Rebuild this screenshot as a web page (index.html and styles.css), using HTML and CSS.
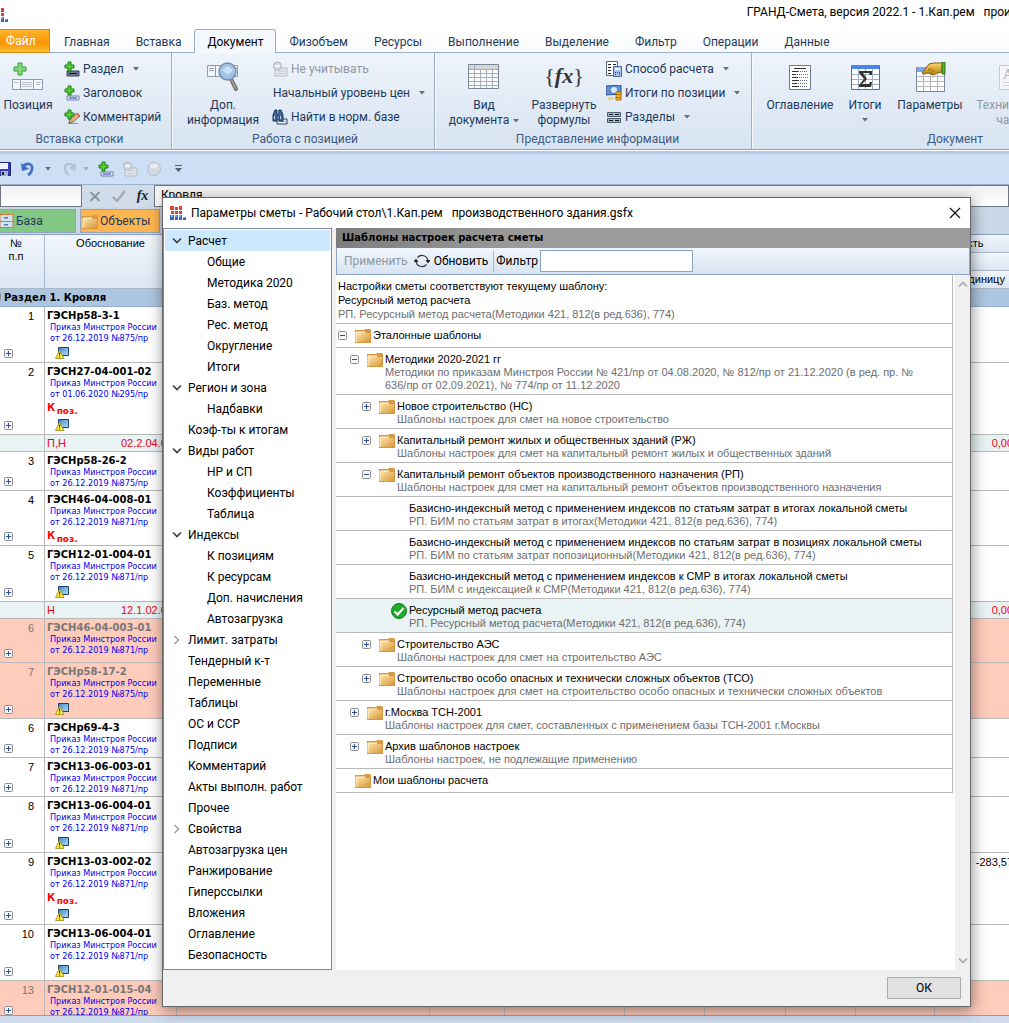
FILE: index.html
```html
<!DOCTYPE html>
<html lang="ru">
<head>
<meta charset="utf-8">
<title>ГРАНД-Смета</title>
<link rel="stylesheet" href="styles.css">
</head>
<body>
<svg class="sprite" aria-hidden="true">
  <defs>
    <linearGradient id="gFolder" x1="0" y1="0" x2="1" y2="1"><stop offset="0" stop-color="#fde9ac"/><stop offset="1" stop-color="#d9963a"/></linearGradient>
    <linearGradient id="gBlue" x1="0" y1="0" x2="1" y2="1"><stop offset="0" stop-color="#3f86c4"/><stop offset="1" stop-color="#b5e0fa"/></linearGradient>
    <linearGradient id="gHand" x1="0" y1="0" x2="0" y2="1"><stop offset="0" stop-color="#fbd768"/><stop offset="1" stop-color="#b07a10"/></linearGradient>
    <symbol id="logo" viewBox="0 0 16 14">
      <path d="M0 0h4v4H0zM5 1h3v3H5zM9 0h3v4H9zM1 5h3v3H1zM5 5h3v3H5zM9 5h3v3H9z" fill="#d6453a"/>
      <path d="M0 9h4v5H0zM5 9h3v5H5zM9 9h3v5H9zM13 11h3v3h-3z" fill="#3566b0"/>
      <path d="M1 9h2v2H1zM5 9h2v2H5zM9 9h2v2H9zM13 11h2v1h-2z" fill="#7fb0ea"/>
    </symbol>
    <symbol id="folder" viewBox="0 0 16 15">
      <path d="M8 3l2-2h5l1 1v3H8z" fill="#d99a45"/>
      <path d="M0 2h10v2h6v11H0z" fill="#d8973f"/>
      <path d="M1 4h9l1 1h4v9H1z" fill="url(#gFolder)"/>
      <path d="M1 14V4h9" fill="none" stroke="#fff6d8"/>
    </symbol>
    <symbol id="plus" viewBox="0 0 9 9">
      <rect x=".5" y=".5" width="8" height="8" rx="1" fill="#f6f6f6" stroke="#8f8f8f"/>
      <path d="M2 4.500h5M4.500 2v5" stroke="#2e4f9e"/>
    </symbol>
    <symbol id="minus" viewBox="0 0 9 9">
      <rect x=".5" y=".5" width="8" height="8" rx="1" fill="#f6f6f6" stroke="#8f8f8f"/>
      <path d="M2 4.500h5" stroke="#2e4f9e"/>
    </symbol>
    <symbol id="caret" viewBox="0 0 6 4"><path d="M0 0h6L3 3.500z" fill="#666c78"/></symbol>
    <symbol id="down" viewBox="0 0 10 8"><path d="M1 1.500l4 4 4-4" fill="none" stroke="#404040" stroke-width="1.700"/></symbol>
    <symbol id="right" viewBox="0 0 8 10"><path d="M1.500 1l4 4-4 4" fill="none" stroke="#a6a6a6" stroke-width="1.700"/></symbol>
    <symbol id="addrow" viewBox="0 0 16 16">
      <path d="M3 11h12v4H3z" fill="#e8edf5" stroke="#6a7f9d"/><path d="M5 13h8" stroke="#1b35c9"/>
      <path d="M4 1h3v3h3v3H7v3H4V7H1V4h3z" fill="#4fd22c" stroke="#1f7d16"/>
    </symbol>
    <symbol id="addsec" viewBox="0 0 16 16">
      <path d="M3 10h12v5H3z" fill="#6c7a8c" stroke="#3a4656"/><path d="M5 12.500h8" stroke="#10151c"/>
      <path d="M4 1h3v3h3v3H7v3H4V7H1V4h3z" fill="#4fd22c" stroke="#1f7d16"/>
    </symbol>
    <symbol id="addnote" viewBox="0 0 16 16">
      <path d="M4 14.500h10" stroke="#8a94a8"/><path d="M5 14l1-4 7-6 3 3-7 6z" fill="#e3b27c" stroke="#6b4a3a" stroke-width=".8"/>
      <path d="M12 5l1.500-1.500L16 6l-1.300 1.500z" fill="#d9746c"/>
      <path d="M4 1h3v3h3v3H7v3H4V7H1V4h3z" fill="#4fd22c" stroke="#1f7d16"/>
    </symbol>
    <symbol id="skip" viewBox="0 0 16 16">
      <path d="M3 7h12v8H3z" fill="#e3e7ee" stroke="#b4bac6"/><path d="M5 10h8M5 12.500h8" stroke="#c3c8d2"/>
      <circle cx="5.500" cy="5" r="4" fill="#d5d9e0" stroke="#b0b6c2"/><path d="M3 5h5" stroke="#fff" stroke-width="1.500"/>
    </symbol>
    <symbol id="warn" viewBox="0 0 14 12">
      <path d="M3.500.5h10v8h-10z" fill="url(#gBlue)" stroke="#1d3f63"/>
      <path d="M4.500 3L9 11.500H.5z" fill="#ffe93a" stroke="#9a8a1c" stroke-width=".8"/><path d="M4.600 5.500v3M4.600 9.500v1" stroke="#222"/>
    </symbol>
  </defs>
</svg>

<header class="titlebar">
  <svg class="app-logo"><use href="#logo"/></svg>
  <h1 class="app-title">ГРАНД-Смета, версия 2022.1 - 1.Кап.рем&nbsp;&nbsp; производственного здания.gsfx</h1>
</header>

<nav class="tabs">
  <button class="tab tab-file">Файл</button>
  <button class="tab">Главная</button>
  <button class="tab">Вставка</button>
  <button class="tab tab-active">Документ</button>
  <button class="tab">Физобъем</button>
  <button class="tab">Ресурсы</button>
  <button class="tab">Выполнение</button>
  <button class="tab">Выделение</button>
  <button class="tab">Фильтр</button>
  <button class="tab">Операции</button>
  <button class="tab">Данные</button>
</nav>

<section class="ribbon">
  <div class="group group-insert">
    <div class="group-body">
      <button class="big w56">
        <svg class="ico32" viewBox="0 0 32 32"><path d="M6 1h4v4h4v4h-4v4H6V9H2V5h4z" fill="#7fdc74" stroke="#3f9a44"/><path d="M.5 17.500h30v10H.5z" fill="#f3f6fa" stroke="#8d9bb0"/><path d="M8.500 18v9M21.500 18v9" stroke="#8d9bb0"/><path d="M2 20.500h5M10 20.500h10M10 22.500h10M10 24.500h10M24 20.500h5M24 22.500h4" stroke="#b9c0cb"/></svg>
        <span>Позиция</span>
      </button>
      <div class="stack stack-insert">
        <button class="small"><svg class="ico16"><use href="#addsec"/></svg>Раздел<svg class="caret"><use href="#caret"/></svg></button>
        <button class="small"><svg class="ico16"><use href="#addrow"/></svg>Заголовок</button>
        <button class="small"><svg class="ico16"><use href="#addnote"/></svg>Комментарий</button>
      </div>
    </div>
    <div class="group-label">Вставка строки</div>
  </div>
  <div class="group group-position">
    <div class="group-body">
      <button class="big w94">
        <svg class="ico32" viewBox="0 0 32 32"><path d="M.5 3.500h30v11H.5z" fill="#f3f6fa" stroke="#8d9bb0"/><path d="M8.500 4v10" stroke="#8d9bb0"/><path d="M2 6.500h5M2 8.500h5M26 6.500h4" stroke="#9aa6b8"/><path d="M24 17l5 10" stroke="#77736f" stroke-width="4" stroke-linecap="round"/><path d="M24 17l5 10" stroke="#bdbab6" stroke-width="1"/><circle cx="20.500" cy="9.500" r="8.500" fill="#9fc4ea" stroke="#7d8da3" stroke-width="1.500"/><path d="M15 8l6-4 5 4-5 5z" fill="#cbe2f8"/></svg>
        <span>Доп.<br>информация</span>
      </button>
      <div class="stack">
        <button class="small" disabled><svg class="ico16"><use href="#skip"/></svg>Не учитывать</button>
        <button class="small no-icon">Начальный уровень цен<svg class="caret"><use href="#caret"/></svg></button>
        <button class="small"><svg class="ico16" viewBox="0 0 16 16"><path d="M5 10h10v5H5z" fill="#eef2f8" stroke="#2e405c"/><path d="M6 12.500h8" stroke="#93a3bb"/><path d="M1 12V6l2-5h2v4h2V1h2l2 5v6H7V7H5v5z" fill="#41689c" stroke="#1c365e"/><path d="M2.500 7v3M8.500 7v3" stroke="#b9d2ef"/></svg>Найти в норм. базе</button>
      </div>
    </div>
    <div class="group-label">Работа с позицией</div>
  </div>
  <div class="group group-view">
    <div class="group-body">
      <button class="big w80">
        <svg class="ico32" viewBox="0 0 32 32"><path d="M.5 2.500h30v24H.5z" fill="#fff" stroke="#77879a"/><path d="M1 3h29v4H1z" fill="#d7d8d6"/><path d="M1 7.500h29M1 11.500h29M1 15.500h29M1 19.500h29M1 23.500h29M6.500 3v23M12.500 7v19M18.500 7v19M24.500 7v19" stroke="#a3adbd"/></svg>
        <span>Вид<br>документа<svg class="caret caret-inline"><use href="#caret"/></svg></span>
      </button>
      <button class="big w80">
        <span class="fx-large">{<i>fx</i>}</span>
        <span>Развернуть<br>формулы</span>
      </button>
      <div class="stack">
        <button class="small"><svg class="ico16" viewBox="0 0 16 16"><path d="M.5.500h11v14H.5z" fill="#fff" stroke="#55657e"/><path d="M2 3.500h3M2 6.500h3M2 9.500h3M2 12.500h3M7 3.500h3" stroke="#222"/><path d="M7.500 5.500h8v10h-8z" fill="#a9c4ea" stroke="#49689a"/><path d="M9 7h5v2H9z" fill="#fff"/><path d="M9 11h1v1H9zM11 11h1v1h-1zM9 13h1v1H9z" fill="#253f75"/><path d="M13 11h1v3h-1z" fill="#d53e32"/></svg>Способ расчета<svg class="caret"><use href="#caret"/></svg></button>
        <button class="small"><svg class="ico16" viewBox="0 0 16 16"><path d="M0 1l15-1v9L0 10z" fill="#5f8fd0" stroke="#2c4f8d"/><circle cx="8" cy="5" r="3" fill="#dbe8fa"/><path d="M10 7h5v8h-5z" fill="#f3b92d" stroke="#a86b0a"/><path d="M10 9.500h5M10 12.500h5" stroke="#a86b0a"/><path d="M2 12h6v3H2z" fill="#f5d27a"/></svg>Итоги по позиции<svg class="caret"><use href="#caret"/></svg></button>
        <button class="small"><svg class="ico16" viewBox="0 0 16 16"><path d="M1.500 3.500h13v4h-13zM1.500 9.500h13v4h-13z" fill="#aab8c6" stroke="#4c5d70"/><path d="M3 5.500h4M9 5.500h4M3 11.500h4M9 11.500h4" stroke="#10151c"/></svg>Разделы<svg class="caret"><use href="#caret"/></svg></button>
      </div>
    </div>
    <div class="group-label">Представление информации</div>
  </div>
  <div class="group group-document">
    <div class="group-body">
      <button class="big w82">
        <svg class="ico32" viewBox="0 0 32 32"><path d="M5.500 3.500h21v24h-21z" fill="#fff" stroke="#6b7d98"/><path d="M10 6.500h12" stroke="#333"/><path d="M8 9.500h7M8 12.500h4M8 15.500h6M8 18.500h7M8 21.500h5M8 24.500h7" stroke="#333"/><path d="M14 9.500h10M13 12.500h11M15 15.500h9M16 18.500h8M14 21.500h10M16 24.500h8" stroke="#5a6f96" stroke-dasharray="1 1"/></svg>
        <span>Оглавление</span>
      </button>
      <button class="big w48">
        <svg class="ico32" viewBox="0 0 32 32"><path d="M2.500 3.500h28v24h-28z" fill="#fff" stroke="#4d72ac"/><path d="M3 3h27v4H3z" fill="#4a86e8"/><path d="M3 12.500h27M3 17.500h27M3 22.500h27M9.500 7v20M16.500 7v20M23.500 7v20" stroke="#9db0cf"/><path d="M10 9h13v4h-2l-1-2h-6l4 6-5 5h7l1-2h2l-1 5H10v-2l5-6-5-6z" fill="#333"/></svg>
        <span>Итоги<br><svg class="caret caret-under"><use href="#caret"/></svg></span>
      </button>
      <button class="big w82">
        <svg class="ico32" viewBox="0 0 32 32"><path d="M2.500 5.500h28v24h-28z" fill="#fff" stroke="#7a8899"/><path d="M3 5h27v5H3z" fill="#79a8ee"/><path d="M3 14.500h27M3 19.500h27M3 24.500h27M9.500 10v19M16.500 10v19M23.500 10v19" stroke="#b3b7bd"/><path d="M8 11l7-9 5-1h8v9l-5 1-3 2-3-1-3-1-4 1z" fill="url(#gHand)" stroke="#8a5d0c"/><path d="M14 8l4-1M17 11l3-3" stroke="#8a5d0c"/><path d="M28 0h3v12h-3z" fill="#54b32e" stroke="#2f7a16"/></svg>
        <span>Параметры</span>
      </button>
      <button class="big w82" disabled>
        <svg class="ico32" viewBox="0 0 32 32"><path d="M3.500 3.500h26v24h-26z" fill="#f4f5f7" stroke="#c5cad3"/><text x="7" y="17" font-family="Liberation Serif, serif" font-size="15" font-weight="700" fill="#b4b8c0">A</text><path d="M7 20.500h18M7 23.500h18" stroke="#cdd1d8"/></svg>
        <span>Техническая<br>часть</span>
      </button>
    </div>
    <div class="group-label">Документ</div>
  </div>
</section>

<div class="quick">
  <button class="q q-save" aria-label="Сохранить"><svg class="ico16" viewBox="0 0 16 16"><path d="M1.500 1.500h13v13h-13z" fill="#3b3fb4" stroke="#20246e"/><path d="M4 2h8v6H4z" fill="#eef2fc"/><path d="M5 10h7v5H5z" fill="#aab4d6"/><path d="M6 11h2v3H6z" fill="#222"/></svg></button>
  <button class="q q-undo" aria-label="Отменить"><svg class="ico16" viewBox="0 0 16 16"><path d="M3 5c5-4 10-2 9 3-.5 3-2 5-4 6" fill="none" stroke="#3d6fc2" stroke-width="2.600"/><path d="M1 2l1 8 7-2z" fill="#3d6fc2"/></svg></button>
  <button class="q q-caret" aria-label="Список отмены"><svg class="caret"><use href="#caret"/></svg></button>
  <button class="q q-redo" aria-label="Вернуть" disabled><svg class="ico16" viewBox="0 0 16 16"><path d="M13 5c-5-4-10-2-9 3 .5 3 2 5 4 6" fill="none" stroke="#b5c2d6" stroke-width="2.400"/><path d="M15 2l-1 8-6-3z" fill="#b5c2d6"/></svg></button>
  <button class="q q-caret faded" aria-label="Список возврата" disabled><svg class="caret"><use href="#caret"/></svg></button>
  <button class="q q-add" aria-label="Добавить"><svg class="ico16"><use href="#addrow"/></svg></button>
  <button class="q q-skip" aria-label="Не учитывать" disabled><svg class="ico16"><use href="#skip"/></svg></button>
  <button class="q q-skip" aria-label="Состояние" disabled><svg class="ico16" viewBox="0 0 16 16"><circle cx="8" cy="8" r="6.500" fill="#d3d9e2" stroke="#b3bcca"/><ellipse cx="8" cy="5" rx="4" ry="2.500" fill="#e9edf3"/></svg></button>
  <button class="q q-caret" aria-label="Настройка панели"><svg class="more" viewBox="0 0 7 8"><path d="M0 .5h7" stroke="#555c68"/><path d="M0 3h7L3.500 7z" fill="#555c68"/></svg></button>
</div>

<div class="formula">
  <input class="cell-name" aria-label="Ячейка">
  <button class="q" aria-label="Отмена"><svg class="ico16" viewBox="0 0 16 16"><path d="M3.500 4l9 9M12.500 4l-9 9" stroke="#8f949c" stroke-width="2"/></svg></button>
  <button class="q" aria-label="Ввод"><svg class="ico16" viewBox="0 0 16 16"><path d="M2 9l4 4 8-10" fill="none" stroke="#a4a7ac" stroke-width="2.200"/></svg></button>
  <button class="q fx-small" aria-label="Функция">fx</button>
  <input class="cell-value" aria-label="Значение" value="Кровля">
</div>

<div class="nav-row">
  <button class="nav-btn nav-base"><svg class="ico16" viewBox="0 0 16 16"><path d="M0 1.500h13v13H0z" fill="#cfe2f6" stroke="#d07a32"/><path d="M0 8.500h13" stroke="#d07a32"/><path d="M4 4h4v1.500H4zM4 11h4v1.500H4z" fill="#5679a8"/></svg>База</button>
  <button class="nav-btn nav-objects"><svg class="folder"><use href="#folder"/></svg>Объекты</button>
</div>

<main class="sheet">
  <table class="grid">
    <colgroup><col class="c44"><col class="c132"><col class="c253"><col class="c75"><col class="c120"><col class="c80"><col class="c81"><col class="c70"><col class="c79"><col class="c83"><col class="c40"></colgroup>
    <thead>
      <tr><th rowspan="3">№<br>п.п</th><th rowspan="3">Обоснование</th><th rowspan="3" colspan="6"></th><th colspan="3">Стоимость</th></tr>
      <tr><th colspan="3"></th></tr>
      <tr><th></th><th>на единицу</th><th></th></tr>
    </thead>
    <tbody>
      <tr class="section"><td colspan="11"><svg class="exp exp-cut"><use href="#minus"/></svg>Раздел 1. Кровля</td></tr>
      <tr><td class="num"><div class="num-in">1<svg class="exp"><use href="#plus"/></svg></div></td><td><b>ГЭСНр58-3-1</b><p>Приказ Минстроя России<br>от 26.12.2019 №875/пр</p><svg class="warn"><use href="#warn"/></svg></td><td colspan="7"></td><td></td><td></td></tr>
      <tr><td class="num"><div class="num-in">2<svg class="exp"><use href="#plus"/></svg></div></td><td><b>ГЭСН27-04-001-02</b><p>Приказ Минстроя России<br>от 01.06.2020 №295/пр</p><em>К <sub>поз.</sub></em><svg class="warn"><use href="#warn"/></svg></td><td colspan="7"></td><td></td><td></td></tr>
      <tr class="res"><td></td><td><div class="res-in"><span>П,Н</span><span>02.2.04.03</span></div></td><td colspan="7"></td><td class="val">0,00</td><td></td></tr>
      <tr><td class="num"><div class="num-in">3<svg class="exp"><use href="#plus"/></svg></div></td><td><b>ГЭСНр58-26-2</b><p>Приказ Минстроя России<br>от 26.12.2019 №875/пр</p></td><td colspan="7"></td><td></td><td></td></tr>
      <tr><td class="num"><div class="num-in">4<svg class="exp"><use href="#plus"/></svg></div></td><td><b>ГЭСН46-04-008-01</b><p>Приказ Минстроя России<br>от 26.12.2019 №871/пр</p><em>К <sub>поз.</sub></em></td><td colspan="7"></td><td></td><td></td></tr>
      <tr><td class="num"><div class="num-in">5<svg class="exp"><use href="#plus"/></svg></div></td><td><b>ГЭСН12-01-004-01</b><p>Приказ Минстроя России<br>от 26.12.2019 №871/пр</p><svg class="warn"><use href="#warn"/></svg></td><td colspan="7"></td><td></td><td></td></tr>
      <tr class="res"><td></td><td><div class="res-in"><span>Н</span><span>12.1.02.03</span></div></td><td colspan="7"></td><td class="val">0,00</td><td></td></tr>
      <tr class="off off-tall"><td class="num"><div class="num-in">6<svg class="exp"><use href="#plus"/></svg></div></td><td><b>ГЭСН46-04-003-01</b><p>Приказ Минстроя России<br>от 26.12.2019 №871/пр</p></td><td colspan="7"></td><td></td><td></td></tr>
      <tr class="off"><td class="num"><div class="num-in">7<svg class="exp"><use href="#plus"/></svg></div></td><td><b>ГЭСНр58-17-2</b><p>Приказ Минстроя России<br>от 26.12.2019 №875/пр</p><svg class="warn"><use href="#warn"/></svg></td><td colspan="7"></td><td></td><td></td></tr>
      <tr><td class="num"><div class="num-in">6<svg class="exp"><use href="#plus"/></svg></div></td><td><b>ГЭСНр69-4-3</b><p>Приказ Минстроя России<br>от 26.12.2019 №875/пр</p></td><td colspan="7"></td><td></td><td></td></tr>
      <tr><td class="num"><div class="num-in">7<svg class="exp"><use href="#plus"/></svg></div></td><td><b>ГЭСН13-06-003-01</b><p>Приказ Минстроя России<br>от 26.12.2019 №871/пр</p></td><td colspan="7"></td><td></td><td></td></tr>
      <tr><td class="num"><div class="num-in">8<svg class="exp"><use href="#plus"/></svg></div></td><td><b>ГЭСН13-06-004-01</b><p>Приказ Минстроя России<br>от 26.12.2019 №871/пр</p><svg class="warn"><use href="#warn"/></svg></td><td colspan="7"></td><td></td><td></td></tr>
      <tr><td class="num"><div class="num-in">9<svg class="exp"><use href="#plus"/></svg></div></td><td><b>ГЭСН13-03-002-02</b><p>Приказ Минстроя России<br>от 26.12.2019 №871/пр</p><em>К <sub>поз.</sub></em><svg class="warn"><use href="#warn"/></svg></td><td colspan="7"></td><td class="val">-283,57</td><td></td></tr>
      <tr><td class="num"><div class="num-in">10<svg class="exp"><use href="#plus"/></svg></div></td><td><b>ГЭСН13-06-004-01</b><p>Приказ Минстроя России<br>от 26.12.2019 №871/пр</p><svg class="warn"><use href="#warn"/></svg></td><td colspan="7"></td><td></td><td></td></tr>
      <tr class="off"><td class="num"><div class="num-in">13<svg class="exp"><use href="#plus"/></svg></div></td><td><b>ГЭСН12-01-015-04</b><p>Приказ Минстроя России<br>от 26.12.2019 №871/пр</p></td><td></td><td></td><td></td><td></td><td></td><td></td><td></td><td></td><td></td></tr>
    </tbody>
  </table>
</main>
<footer class="status"></footer>

<section class="dialog" role="dialog" aria-labelledby="dlg-title">
  <header class="dlg-head">
    <svg class="dlg-logo"><use href="#logo"/></svg>
    <h2 id="dlg-title">Параметры сметы - Рабочий стол\1.Кап.рем&nbsp;&nbsp; производственного здания.gsfx</h2>
    <button class="close" aria-label="Закрыть"><svg viewBox="0 0 12 12"><path d="M1 1l10 10M11 1L1 11" stroke="#111" stroke-width="1.200"/></svg></button>
  </header>
  <div class="dlg-body">
    <ul class="pages">
      <li class="page-on"><svg class="chev"><use href="#down"/></svg>Расчет</li>
      <li class="sub">Общие</li>
      <li class="sub">Методика 2020</li>
      <li class="sub">Баз. метод</li>
      <li class="sub">Рес. метод</li>
      <li class="sub">Округление</li>
      <li class="sub">Итоги</li>
      <li><svg class="chev"><use href="#down"/></svg>Регион и зона</li>
      <li class="sub">Надбавки</li>
      <li class="leaf">Коэф-ты к итогам</li>
      <li><svg class="chev"><use href="#down"/></svg>Виды работ</li>
      <li class="sub">НР и СП</li>
      <li class="sub">Коэффициенты</li>
      <li class="sub">Таблица</li>
      <li><svg class="chev"><use href="#down"/></svg>Индексы</li>
      <li class="sub">К позициям</li>
      <li class="sub">К ресурсам</li>
      <li class="sub">Доп. начисления</li>
      <li class="sub">Автозагрузка</li>
      <li><svg class="chev"><use href="#right"/></svg>Лимит. затраты</li>
      <li class="leaf">Тендерный к-т</li>
      <li class="leaf">Переменные</li>
      <li class="leaf">Таблицы</li>
      <li class="leaf">ОС и ССР</li>
      <li class="leaf">Подписи</li>
      <li class="leaf">Комментарий</li>
      <li class="leaf">Акты выполн. работ</li>
      <li class="leaf">Прочее</li>
      <li><svg class="chev"><use href="#right"/></svg>Свойства</li>
      <li class="leaf">Автозагрузка цен</li>
      <li class="leaf">Ранжирование</li>
      <li class="leaf">Гиперссылки</li>
      <li class="leaf">Вложения</li>
      <li class="leaf">Оглавление</li>
      <li class="leaf">Безопасность</li>
    </ul>
    <div class="pane">
      <h3 class="pane-title">Шаблоны настроек расчета сметы</h3>
      <div class="toolbar">
        <button class="tool" disabled>Применить</button>
        <button class="tool tool-refresh"><svg class="ico16" viewBox="0 0 16 16"><path d="M3.500 4.500A6 6 0 0 1 14 8M12.500 11.500A6 6 0 0 1 2 8" fill="none" stroke="#333" stroke-width="1.200"/><path d="M11.500 7h5L14 10.500zM-.5 9h5L2 5.500z" fill="#222"/></svg>Обновить</button>
        <label for="flt">Фильтр</label>
        <input id="flt" class="filter">
      </div>
      <div class="view">
        <div class="list">
          <div class="current"><strong>Настройки сметы соответствуют текущему шаблону:</strong><strong>Ресурсный метод расчета</strong><p>РП. Ресурсный метод расчета(Методики 421, 812(в ред.636), 774)</p></div>
          <div class="row"><svg class="exp"><use href="#minus"/></svg><svg class="folder"><use href="#folder"/></svg><div>Эталонные шаблоны</div></div>
          <div class="row l1"><svg class="exp"><use href="#minus"/></svg><svg class="folder"><use href="#folder"/></svg><div>Методики 2020-2021 гг<p>Методики по приказам Минстроя России № 421/пр от 04.08.2020, № 812/пр от 21.12.2020 (в ред. пр. №<br>636/пр от 02.09.2021), № 774/пр от 11.12.2020</p></div></div>
          <div class="row l2"><svg class="exp"><use href="#plus"/></svg><svg class="folder"><use href="#folder"/></svg><div>Новое строительство (НС)<p>Шаблоны настроек для смет на новое строительство</p></div></div>
          <div class="row l2"><svg class="exp"><use href="#plus"/></svg><svg class="folder"><use href="#folder"/></svg><div>Капитальный ремонт жилых и общественных зданий (РЖ)<p>Шаблоны настроек для смет на капитальный ремонт жилых и общественных зданий</p></div></div>
          <div class="row l2"><svg class="exp"><use href="#minus"/></svg><svg class="folder"><use href="#folder"/></svg><div>Капитальный ремонт объектов производственного назначения (РП)<p>Шаблоны настроек для смет на капитальный ремонт объектов производственного назначения</p></div></div>
          <div class="row l3"><div>Базисно-индексный метод с применением индексов по статьям затрат в итогах локальной сметы<p>РП. БИМ по статьям затрат в итогах(Методики 421, 812(в ред.636), 774)</p></div></div>
          <div class="row l3"><div>Базисно-индексный метод с применением индексов по статьям затрат в позициях локальной сметы<p>РП. БИМ по статьям затрат попозиционный(Методики 421, 812(в ред.636), 774)</p></div></div>
          <div class="row l3"><div>Базисно-индексный метод с применением индексов к СМР в итогах локальной сметы<p>РП. БИМ с индексацией к СМР(Методики 421, 812(в ред.636), 774)</p></div></div>
          <div class="row l3c row-on"><svg class="ico16" viewBox="0 0 16 16"><circle cx="8" cy="8" r="7.500" fill="#20ac2b" stroke="#0d7d1c"/><path d="M3.500 8.500l3.200 3L12.500 5" fill="none" stroke="#fff" stroke-width="2"/></svg><div>Ресурсный метод расчета<p>РП. Ресурсный метод расчета(Методики 421, 812(в ред.636), 774)</p></div></div>
          <div class="row l2"><svg class="exp"><use href="#plus"/></svg><svg class="folder"><use href="#folder"/></svg><div>Строительство АЭС<p>Шаблоны настроек для смет на строительство АЭС</p></div></div>
          <div class="row l2"><svg class="exp"><use href="#plus"/></svg><svg class="folder"><use href="#folder"/></svg><div>Строительство особо опасных и технически сложных объектов (ТСО)<p>Шаблоны настроек для смет на строительство особо опасных и технически сложных объектов</p></div></div>
          <div class="row l1"><svg class="exp"><use href="#plus"/></svg><svg class="folder"><use href="#folder"/></svg><div>г.Москва ТСН-2001<p>Шаблоны настроек для смет, составленных с применением базы ТСН-2001 г.Москвы</p></div></div>
          <div class="row l1"><svg class="exp"><use href="#plus"/></svg><svg class="folder"><use href="#folder"/></svg><div>Архив шаблонов настроек<p>Шаблоны настроек, не подлежащие применению</p></div></div>
          <div class="row l0f"><svg class="folder"><use href="#folder"/></svg><div>Мои шаблоны расчета</div></div>
        </div>
        <div class="scroll"><svg class="sc-up"><use href="#down"/></svg><svg><use href="#down"/></svg></div>
      </div>
    </div>
  </div>
  <div class="dlg-foot"><button class="ok">ОК</button></div>
</section>
</body>
</html>
```
FILE: styles.css
```css
* { box-sizing: border-box; }
html { height: 100%; }
body {
  margin: 0;
  height: 100%;
  display: flex;
  flex-direction: column;
  position: relative;
  overflow: hidden;
  background: #fff;
  color: #000;
  font: 12px/15px Roboto, "Noto Sans", sans-serif;
}
body > * { flex: none; }
h1, h2, h3, p, ul { margin: 0; padding: 0; font-size: inherit; font-weight: 400; }
button { margin: 0; padding: 0; border: 0; background: none; color: inherit; font: inherit; }
input { font: inherit; border-radius: 0; outline: 0; }
svg { display: block; flex: none; }

.sprite { position: absolute; width: 0; height: 0; }
.ico16 { width: 16px; height: 16px; }
.ico32 { width: 32px; height: 32px; }
.caret { width: 6px; height: 4px; margin-left: 9px; }
.folder { width: 16px; height: 15px; }
.exp { width: 9px; height: 9px; }

/* Window caption */
.titlebar { display: flex; height: 29px; justify-content: space-between; padding-top: 5px; overflow: hidden; }
.app-logo { width: 16px; height: 14px; margin: 3px 0 0 -8px; }
.app-title { flex: none; width: 26%; white-space: nowrap; }

/* Ribbon tabs */
.tabs { display: flex; height: 24px; border-bottom: 1px solid #9aaec8; color: #1e395b; background: linear-gradient(#fff, #f8fafc); }
.tab { height: 24px; padding: 2px 13px 0; }
.tab-file { width: 50px; padding: 0 0 0 6px; text-align: left; color: #fff; background: linear-gradient(#ffb52e, #f79400 60%, #ffc233); border: 1px solid #cf8c15; border-left: 0; margin-right: 1px; }
.tab-active { color: #000; border: 1px solid #9aaec8; border-bottom: 0; border-radius: 3px 3px 0 0; background: #f4f8fd; padding: 1px 12px 0; }

/* Ribbon */
.ribbon { display: flex; height: 97px; overflow: hidden; color: #1e395b; background: linear-gradient(#eef4fb, #e2ebf6 50%, #d8e4f1); border-bottom: 1px solid #8ba0bc; }
.group { flex: none; display: flex; flex-direction: column; justify-content: space-between; padding-top: 4px; border-right: 1px solid #9db0ca; box-shadow: 1px 0 #f6f9fd; }
.group-insert { width: 172px; }
.group-insert .group-label { padding-right: 12px; }
.group-position { width: 263px; padding-left: 4px; }
.group-view { width: 317px; padding-left: 9px; }
.group-document { width: 400px; padding-left: 7px; }
.group-body { display: flex; }
.group-label { height: 20px; padding-top: 3px; text-align: center; color: #3e5a84; }
.big { display: flex; flex-direction: column; align-items: center; gap: 4px; padding-top: 5px; height: 72px; text-align: center; }
.w48 { width: 48px; }
.w56 { width: 56px; }
.w80 { width: 80px; }
.w82 { width: 82px; }
.w94 { width: 94px; }
.small { display: flex; align-items: center; gap: 3px; height: 24px; padding: 0 2px; white-space: nowrap; }
.small .caret { margin-left: 6px; }
.small.no-icon { padding-left: 3px; }
.stack-insert { margin-left: 6px; }
button:disabled { color: #8f97a3; }
.caret-inline { display: inline-block; margin-left: 4px; vertical-align: middle; }
.caret-under { margin: 5px auto 0; }
.fx-large { height: 32px; font: 22px/28px "Liberation Serif", serif; color: #333; }
.fx-large i { font-weight: 700; }

/* Quick access bar */
.quick { display: flex; align-items: center; height: 34px; margin-top: 1px; background: #cddff5; border-top: 3px solid #b3c8e2; border-bottom: 1px solid #9ab0ce; padding-bottom: 1px; }
.q { flex: none; display: flex; align-items: center; justify-content: center; }
.q-save { margin-left: -4px; width: 16px; }
.q-undo { margin-left: 6px; width: 20px; }
.q-redo { margin-left: 8px; width: 18px; }
.q-caret { width: 8px; margin-left: 6px; }
.q-caret .caret { margin: 0; }
.faded { opacity: .4; margin-left: 4px; }
.q-add { margin: 0 0 0 8px; }
.q-skip { margin-left: 8px; }
.q-skip + .q-caret { margin-left: 12px; }
.more { width: 7px; height: 8px; }

/* Formula bar */
.formula { display: flex; height: 22px; background: #d0dcea; }
.formula input { height: 22px; border: 1px solid #6f7680; background: linear-gradient(#f1f1f1, #fff); }
.cell-name { width: 82px; border-left: 0; }
.formula .q { width: 23px; margin-left: 1px; }
.formula .fx-small { font: italic 700 14px/20px "Liberation Serif", serif; color: #222; }
.cell-value { flex: 1; padding: 0 0 3px 6px; border-right: 0; min-width: 0; }

/* Section buttons */
.nav-row { display: flex; gap: 4px; height: 28px; padding: 2px 0; background: #cad7e6; border-bottom: 1px solid #8ba0bc; }
.nav-btn { display: flex; align-items: center; gap: 4px; height: 24px; border: 1px solid #93a5bd; color: #1e395b; }
.nav-base { width: 76px; background: #82c783; border-left: 0; padding-left: 0; gap: 0; }
.nav-objects { width: 80px; background: #ffb54f; padding-left: 1px; gap: 2px; }

/* Estimate table */
.sheet { flex: 1 1 0; min-height: 0; overflow: hidden; }
.grid { width: 1057px; table-layout: fixed; border-collapse: separate; border-spacing: 0; font: 11px/13px "Liberation Sans", sans-serif; }
.c44 { width: 45px; }
.c132 { width: 132px; }
.c253 { width: 253px; }
.c75 { width: 75px; }
.c120 { width: 120px; }
.c80 { width: 80px; }
.c81 { width: 81px; }
.c70 { width: 70px; }
.c79 { width: 79px; }
.c83 { width: 83px; }
.c40 { width: 39px; }
.grid th { height: 18px; padding: 2px 0 0; font-weight: 400; vertical-align: top; border-right: 1px solid #a9b8cc; border-bottom: 1px solid #a9b8cc; background: linear-gradient(#f1f6fc, #dbe6f3); }
.grid th:first-child[rowspan] { padding-right: 12px; }
.grid td { padding: 3px 0 0 2px; vertical-align: top; border-right: 1px solid #b9b9b9; border-bottom: 1px solid #b9b9b9; white-space: nowrap; overflow: hidden; }
.grid .section td { height: 18px; padding: 2px 0 0; background: #adc6e0; font: 700 10px/13px "DejaVu Sans", sans-serif; border-bottom-color: #93aecb; }
.exp-cut { float: left; margin: 1px 3px 0 -8px; }
.grid b { display: block; font: 700 10px/12px "DejaVu Sans", sans-serif; }
.grid p { padding-left: 3px; font: 9px/11px "DejaVu Sans Condensed", sans-serif; color: #0000f0; margin-bottom: 1px; }
.grid em { display: block; height: 16px; font: 700 10px/14px "DejaVu Sans", sans-serif; color: #f00; }
.grid sub { font-size: 9px; line-height: 0; margin-left: -2px; }
.warn { width: 14px; height: 12px; margin: 3px 0 3px 8px; }
em + .warn { margin-top: 2px; }
.grid .num { height: 1px; padding-left: 4px; }
.num-in { height: 100%; display: flex; flex-direction: column; justify-content: space-between; padding: 0 10px 4px 0; text-align: right; }
.grid .res td { height: 17px; padding-top: 2px; background: #eaf3f4; color: #f00018; }
.res-in { display: flex; justify-content: space-between; padding-right: 3px; }
.grid .val { text-align: right; padding-right: 4px; }
.grid .off td { background: #ffcbbb; color: #777; }
.off-tall { height: 44px; }
.status { height: 8px; background: #cfdceb; border-top: 1px solid #8ba0bc; }

/* Parameters dialog */
.dialog {
  position: absolute;
  inset: 197px 38px 16px 162px;
  display: flex;
  flex-direction: column;
  background: #f0f0f0;
  border: 1px solid #666;
  box-shadow: 1px 3px 14px rgba(0, 0, 0, .45);
}
.dlg-head { display: flex; align-items: center; height: 30px; background: #fff; padding: 0 9px 0 7px; }
.dlg-logo { width: 16px; height: 14px; margin-right: 5px; }
.dlg-head h2 { flex: 1; }
.close svg { width: 12px; height: 12px; }
.dlg-body { flex: 1; min-height: 0; display: flex; gap: 4px; }
.pages { width: 169px; list-style: none; background: #fff; border: 1px solid #828790; border-left-width: 1px; overflow: hidden; }
.pages li { display: flex; align-items: center; height: 21px; padding: 1px 0 0 7px; margin: 0 1px; white-space: nowrap; }
.pages .sub { padding-left: 42px; }
.pages .leaf { padding-left: 23px; }
.pages .page-on { margin-top: 1px; background: #cce8ff; }
.chev { width: 10px; height: 10px; margin-right: 6px; }
.pane { flex: 1; min-width: 0; display: flex; flex-direction: column; }
.pane-title { height: 20px; padding-left: 6px; font: 700 10px/20px "DejaVu Sans", sans-serif; background: linear-gradient(90deg, #7d7d7d, #9c9c9c 30%); }
.toolbar { display: flex; align-items: center; height: 27px; padding-left: 7px; background: linear-gradient(#f0f6fd, #d8e4f1); border: 1px solid #8aa4c4; border-top: 0; }
.tool { display: flex; align-items: center; gap: 4px; }
.tool-refresh { margin-left: 6px; }
.toolbar label { border-left: 1px solid #a4b8d2; margin-left: 5px; padding: 3px 2px; }
.filter { width: 153px; height: 22px; border: 1px solid #8aa4c4; background: #fff; }
.view { flex: 1; min-height: 0; display: flex; justify-content: space-between; background: #fff; font: 11px/13px "Liberation Sans", sans-serif; }
.list { flex: 1; margin-right: 2px; }
.current, .row { border-right: 1px solid #b9b9b9; border-bottom: 1px solid #b9b9b9; }
.current { padding: 5px 2px 3px; height: 49px; }
.current strong { display: block; font-weight: 400; margin-bottom: 1px; }
.list p { color: #6e6e6e; }
.row { display: flex; align-items: flex-start; min-height: 24px; padding: 5px 0 2px 2px; white-space: nowrap; }
.row .exp { margin: 2px 8px 0 0; }
.row .folder { margin: -1px 2px -1px 0; }
.row .ico16 { margin: -1px 2px 0 0; }
.l1 { padding-left: 14px; }
.l2 { padding-left: 26px; }
.l3 { padding-left: 73px; }
.l3c { padding-left: 55px; }
.l0f { padding-left: 19px; }
.row-on { background: #eaf3f4; }
.scroll { width: 15px; background: #f0f0f0; display: flex; flex-direction: column; align-items: center; justify-content: space-between; padding: 5px 0; }
.scroll svg { width: 10px; height: 8px; opacity: .4; }
.sc-up { transform: rotate(180deg); }
.dlg-foot { display: flex; justify-content: flex-end; height: 36px; padding: 7px 9px 0 0; }
.ok { width: 74px; height: 22px; background: #e1e1e1; border: 1px solid #adadad; }
```
